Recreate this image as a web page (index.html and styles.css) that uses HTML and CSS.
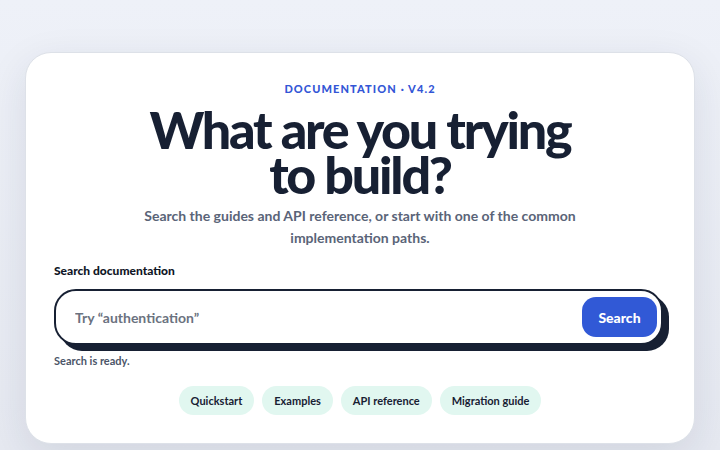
FILE: index.html
```html
<!DOCTYPE html>
<html lang="en">
<head>
<meta charset="utf-8">
<title>Documentation search</title>
<link rel="stylesheet" href="styles.css">
</head>
<body>
<main class="page">
  <section class="card">
    <p class="eyebrow">DOCUMENTATION · V4.2</p>
    <h1 class="title">What are you trying<br>to build?</h1>
    <p class="lede">Search the guides and API reference, or start with one of the common implementation paths.</p>
    <form class="search">
      <label class="search-label" for="q">Search documentation</label>
      <div class="search-box">
        <input id="q" class="search-input" type="text" placeholder="Try “authentication”">
        <button class="search-btn" type="button">Search</button>
      </div>
      <p class="status">Search is ready.</p>
    </form>
    <nav class="chips">
      <a class="chip" href="#">Quickstart</a>
      <a class="chip" href="#">Examples</a>
      <a class="chip" href="#">API reference</a>
      <a class="chip" href="#">Migration guide</a>
    </nav>
  </section>
</main>
</body>
</html>
```
FILE: styles.css
```css
* { box-sizing: border-box; }
html, body { margin: 0; height: 100%; }
body {
  font-family: Lato, "Liberation Sans", sans-serif;
  background: linear-gradient(180deg, #eef1f8 0%, #e6e9f1 100%);
  color: #172033;
}
.page {
  padding: 52px 25px 6px 25px;
  height: 450px;
}
.card {
  background: #ffffff;
  border: 1px solid #dde1e8;
  border-radius: 26px;
  height: 392px;
  padding: 28px 28px 0 28px;
  box-shadow: 0 12px 40px rgba(30, 40, 70, 0.10);
  display: flex;
  flex-direction: column;
  align-items: center;
}
.eyebrow {
  margin: 0;
  font-size: 11px;
  font-weight: 900;
  letter-spacing: 1.1px;
  color: #3356d6;
  line-height: 16px;
}
.title {
  margin: 10px 0 0 0;
  font-size: 52px;
  font-weight: 900;
  letter-spacing: -2.2px;
  line-height: 45px;
  text-align: center;
  color: #172033;
}
.lede {
  margin: 8px 0 0 0;
  max-width: 450px;
  text-align: center;
  font-size: 14px;
  font-weight: 700;
  line-height: 22px;
  color: #5a6478;
}
.search {
  align-self: stretch;
  margin-top: 14px;
}
.search-label {
  display: block;
  font-size: 12px;
  font-weight: 900;
  color: #0f1626;
  line-height: 16px;
}
.search-box {
  margin-top: 10px;
  margin-right: 3px;
  display: flex;
  align-items: center;
  height: 56px;
  border: 2px solid #172033;
  border-radius: 22px;
  padding: 0 4px 0 17px;
  box-shadow: 6px 6px 0 #172033;
  background: #fff;
}
.search-input {
  flex: 1;
  border: 0;
  outline: 0;
  background: transparent;
  font-family: inherit;
  font-size: 14px;
  font-weight: 700;
  color: #172033;
}
.search-input::placeholder { color: #6b7280; }
.search-btn {
  width: 75px;
  height: 40px;
  border: 0;
  border-radius: 14px;
  background: #3159d6;
  color: #fff;
  font-family: inherit;
  font-size: 14px;
  font-weight: 900;
}
.status {
  margin: 9px 0 0 0;
  font-size: 11px;
  font-weight: 700;
  color: #4b5568;
  line-height: 14px;
}
.chips {
  margin-top: 18px;
  display: flex;
  gap: 8px;
  justify-content: center;
}
.chip {
  display: flex;
  align-items: center;
  height: 29px;
  padding: 0 12px;
  border-radius: 15px;
  background: #e1f7f0;
  color: #172033;
  text-decoration: none;
  font-size: 11px;
  font-weight: 700;
}
```
